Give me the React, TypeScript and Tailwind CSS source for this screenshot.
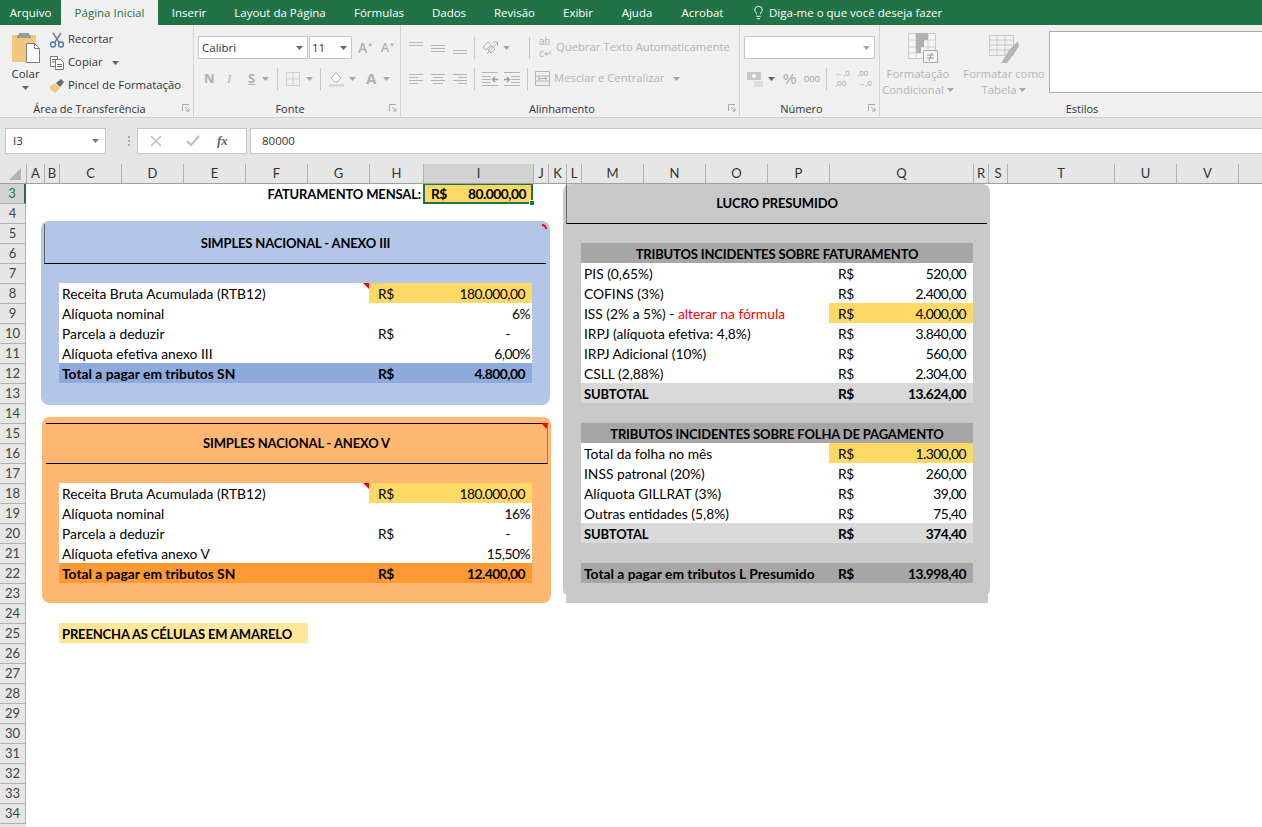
import { ReactNode } from 'react';
import { Lightbulb } from 'lucide-react';

const TABS = [
    ['Arquivo', 61], ['Página Inicial', 97], ['Inserir', 62], ['Layout da Página', 120], ['Fórmulas', 78],
    ['Dados', 62], ['Revisão', 69], ['Exibir', 58], ['Ajuda', 60], ['Acrobat', 71],
] as const;

const COLS = [
    ['A', 18], ['B', 15], ['C', 62], ['D', 62], ['E', 62], ['F', 62], ['G', 62], ['H', 54], ['I', 110], ['J', 15], ['K', 18], ['L', 15],
    ['M', 62], ['N', 62], ['O', 62], ['P', 62], ['Q', 144], ['R', 15], ['S', 19], ['T', 107], ['U', 62], ['V', 62], ['', 24],
] as const;

const ROWS = Array.from({ length: 32 }, (_, i) => i + 3);

function Caret({ color = '#a6a6a6' }: { color?: string }) {
    return (
        <svg width="7" height="4" viewBox="0 0 7 4" className="shrink-0">
            <path d="M0 0h7L3.5 4z" fill={color} />
        </svg>
    );
}

function Launcher() {
    return (
        <svg width="8" height="8" viewBox="0 0 8 8" fill="none" stroke="#a8a8a8">
            <path d="M.5 7V.5H7M3 3l4 4M7 4v3H4" />
        </svg>
    );
}

function Sep({ h = 22 }: { h?: number }) {
    return <div className="w-px bg-[#c6c6c6]" style={{ height: h }} />;
}

function Lines({ rows, w = 14 }: { rows: number[][]; w?: number }) {
    return (
        <svg width={w} height="14" viewBox={`0 0 ${w} 14`} stroke="#b4b4b4" fill="none">
            {rows.map(([y, x1, x2]) => (
                <path key={`${y}-${x1}`} d={`M${x1} ${y}.5H${x2}`} />
            ))}
        </svg>
    );
}

function Group({ width, label, labelX, children, last }: { width: number; label: string; labelX?: number; children: ReactNode; last?: boolean }) {
    return (
        <div className={`relative flex shrink-0 flex-col ${last ? '' : 'border-r border-[#d4d4d4]'}`} style={{ width }}>
            <div className="h-[77px]">{children}</div>
            <div className="relative flex h-[13px] items-center justify-center text-[11px] leading-none text-[#333]">
                <span className="whitespace-nowrap" style={labelX ? { marginLeft: labelX } : undefined}>{label}</span>
                {!last && (
                    <span className="absolute right-[3px] top-[2px]">
                        <Launcher />
                    </span>
                )}
            </div>
        </div>
    );
}

function Clipboard() {
    return (
        <div className="flex h-full">
            <div className="ml-[8px] flex w-[35px] flex-col items-center pt-[7px]">
                <svg width="30" height="31" viewBox="0 0 30 31">
                    <rect x="1" y="3" width="24" height="27" fill="#f0c97f" />
                    <path d="M8 3V1h10v2h2v3H6V3z" fill="#9a9a9a" />
                    <path d="M15.5 11.5h8l5 5v14h-13z" fill="#fff" stroke="#7b7b7b" />
                    <path d="M23.5 11.5v5h5" fill="none" stroke="#7b7b7b" />
                </svg>
                <span className="mt-[3px] text-[11.5px] leading-[16px] text-[#333]">Colar</span>
                <span className="mt-[4px]"><Caret color="#666" /></span>
            </div>
            <div className="ml-[6px] flex flex-col pt-[3px] text-[11.3px] text-[#333]">
                <div className="flex h-[23px] items-center whitespace-nowrap">
                    <svg width="16" height="16" viewBox="0 0 16 16" fill="none" className="mr-[3px]">
                        <path d="M4 1l6 9M12 1L6 10" stroke="#777" strokeWidth="1.4" />
                        <circle cx="4" cy="12.5" r="2.5" stroke="#3b79b6" strokeWidth="1.3" />
                        <circle cx="12" cy="12.5" r="2.5" stroke="#3b79b6" strokeWidth="1.3" />
                    </svg>
                    Recortar
                </div>
                <div className="flex h-[23px] items-center whitespace-nowrap">
                    <svg width="16" height="15" viewBox="0 0 16 15" fill="#fff" stroke="#777" className="mr-[3px]">
                        <path d="M1.5 1.5h7v10h-7z" />
                        <path d="M6.5 4.5h5l3 3v7h-8z" />
                        <path d="M3 4.5h4M3 7h3M8 9.5h5M8 11.5h5" stroke="#3b79b6" />
                    </svg>
                    Copiar
                    <span className="ml-[9px]"><Caret color="#666" /></span>
                </div>
                <div className="flex h-[23px] items-center whitespace-nowrap">
                    <svg width="16" height="14" viewBox="0 0 16 14" className="mr-[3px]">
                        <path d="M0 8l6-4 5 5-5 5-2-2-1 0z" fill="#f0c97f" />
                        <path d="M7 4l5-4 3 3-4 5z" fill="#6b6b6b" />
                    </svg>
                    Pincel de Formatação
                </div>
            </div>
        </div>
    );
}

function FontGroup() {
    return (
        <div className="flex h-full flex-col">
            <div className="flex items-center pl-[4px] pt-[11px]">
                <div className="flex h-[23px] w-[110px] items-center justify-between border border-[#c6c6c6] bg-white pl-[3px] pr-[4px] text-[11.5px] text-[#333]">
                    Calibri
                    <Caret color="#666" />
                </div>
                <div className="ml-px flex h-[23px] w-[43px] items-center justify-between border border-[#c6c6c6] bg-white pl-[2px] pr-[4px] text-[11.5px] text-[#333]">
                    11
                    <Caret color="#666" />
                </div>
                <span className="ml-[6px] flex w-[23px] items-start text-[14px] font-semibold leading-none text-[#b0b0b0]">A<span className="text-[6px]">▲</span></span>
                <span className="flex w-[14px] items-start text-[12px] font-semibold leading-none text-[#b0b0b0]">A<span className="text-[6px]">▼</span></span>
            </div>
            <div className="box-content flex h-[23px] items-center pl-[10px] pt-[8px] text-[13px] font-bold text-[#b0b0b0]">
                <span className="w-[21px]">N</span>
                <span className="w-[23px] pl-[2px] font-['Liberation_Serif',serif] font-normal italic">I</span>
                <span className="w-[14px] underline">S</span>
                <Caret />
                <span className="ml-[8px] mr-[8px]"><Sep /></span>
                <svg width="14" height="14" viewBox="0 0 14 14" fill="none" stroke="#b4b4b4" strokeDasharray="1 1">
                    <path d="M.5.5h13v13H.5zM7 .5v13M.5 7h13" />
                </svg>
                <span className="ml-[6px]"><Caret /></span>
                <span className="ml-[7px] mr-[8px]"><Sep /></span>
                <svg width="15" height="16" viewBox="0 0 15 16">
                    <path d="M2 7l5-5 5 5-4 4H6z" fill="#fff" stroke="#b4b4b4" />
                    <path d="M0 13h15v3H0z" fill="#d9d9d9" />
                </svg>
                <span className="ml-[5px]"><Caret /></span>
                <span className="ml-[10px] text-[15px] leading-none">A</span>
                <span className="ml-[7px]"><Caret /></span>
            </div>
        </div>
    );
}

function IndentIcon({ flip }: { flip?: boolean }) {
    return (
        <svg width="16" height="14" viewBox="0 0 16 14" fill="none" stroke="#b4b4b4" className={flip ? '' : '-scale-x-100'}>
            <path d="M0 .5h16M0 13.5h16M7 4.5h9M7 7.5h9M7 10.5h9" />
            <path d="M0 7.5h5M3 5l2.5 2.5L3 10" stroke="#9a9a9a" strokeWidth="1.3" />
        </svg>
    );
}

function AlignGroup() {
    return (
        <div className="flex h-full flex-col whitespace-nowrap text-[11.3px] text-[#b4b4b4]">
            <div className="box-content flex h-[23px] items-center pl-[8px] pt-[11px]">
                <Lines rows={[[1, 0, 14], [4, 0, 14]]} />
                <span className="ml-[8px]"><Lines rows={[[4, 0, 14], [7, 0, 14], [10, 0, 14]]} /></span>
                <span className="ml-[8px]"><Lines rows={[[9, 0, 14], [12, 0, 14]]} /></span>
                <span className="mx-[7px]"><Sep /></span>
                <svg width="17" height="15" viewBox="0 0 17 15" fill="none" stroke="#b4b4b4" className="overflow-visible">
                    <path d="M1 7l5-5 3 3-5 5zM6 10l4-4 3 3-4 4z" />
                    <path d="M5 14L15 3M11 2h4.500v4" />
                </svg>
                <span className="ml-[4px]"><Caret /></span>
                <span className="ml-[19px] mr-[9px]"><Sep /></span>
                <span className="mr-[4px] font-['Liberation_Sans',sans-serif] text-[10px] leading-[12px]">ab<br />c↵</span>
                Quebrar Texto Automaticamente
            </div>
            <div className="box-content flex h-[23px] items-center pl-[8px] pt-[8px]">
                <Lines rows={[[2, 0, 14], [5, 0, 9], [8, 0, 14], [11, 0, 9]]} />
                <span className="ml-[8px]"><Lines rows={[[2, 0, 14], [5, 2, 12], [8, 0, 14], [11, 2, 12]]} /></span>
                <span className="ml-[8px]"><Lines rows={[[2, 0, 14], [5, 5, 14], [8, 0, 14], [11, 5, 14]]} /></span>
                <span className="mx-[7px]"><Sep /></span>
                <IndentIcon />
                <span className="ml-[6px]"><IndentIcon flip /></span>
                <span className="ml-[7px] mr-[7px]"><Sep /></span>
                <svg width="15" height="15" viewBox="0 0 15 15" fill="none" stroke="#b4b4b4" className="mr-[4px]">
                    <path d="M.5.5h14v14H.5zM.5 5h14M.5 10h14M3 7.500h9M5 6l-2 1.500L5 9M10 6l2 1.500L10 9" />
                </svg>
                Mesclar e Centralizar
                <span className="ml-[9px]"><Caret /></span>
            </div>
        </div>
    );
}

function NumberGroup() {
    return (
        <div className="flex h-full flex-col px-[4px] pt-[11px] text-[#a8a8a8]">
            <div className="flex h-[23px] w-[131px] items-center justify-end border border-[#c6c6c6] bg-white pr-[4px]">
                <Caret />
            </div>
            <div className="box-content flex h-[23px] items-center whitespace-nowrap pl-[3px] pt-[8px] font-['Liberation_Sans',sans-serif]">
                <svg width="17" height="16" viewBox="0 0 17 16">
                    <path d="M0 1h14v8H0z" fill="#c8c8c8" />
                    <circle cx="7" cy="5" r="2" fill="#fff" />
                    <path d="M7 11h9M7 13h9M7 15h9" stroke="#c8c8c8" />
                </svg>
                <span className="ml-[4px]"><Caret color="#666" /></span>
                <span className="ml-[8px] w-[21px] text-[15px] leading-none">%</span>
                <span className="w-[22px] text-[9.5px] leading-none">000</span>
                <span className="mr-[8px]"><Sep /></span>
                <span className="w-[22px] text-[8px] leading-[10px]">←,0<br />,00</span>
                <span className="text-[8px] leading-[10px]">,00<br />→,0</span>
            </div>
        </div>
    );
}

function StylesGroup() {
    return (
        <div className="flex h-full items-start text-[11.3px] leading-[16px] text-[#b4b4b4]">
            <div className="ml-[5px] flex w-[66px] flex-col items-center pt-[8px]">
                <svg width="30" height="30" viewBox="0 0 30 30" className="ml-[10px]">
                    <path d="M.5.5h27v25H.5z" fill="#f4f4f4" stroke="#c8c8c8" />
                    <path d="M.5 7h27M.5 14h27M.5 20h27M8 .5v25M20 .5v25" stroke="#d0d0d0" />
                    <path d="M8 0h12v7H8zM8 7h8v7H8zM8 14h5v6H8z" fill="#b0b0b0" />
                    <path d="M15.500 17.500h14v12h-14z" fill="#f4f4f4" stroke="#aaa" />
                    <path d="M19 22h7M19 25h7M24 20l-3 8" stroke="#999" fill="none" />
                </svg>
                <span className="mt-[3px] whitespace-nowrap">Formatação</span>
                <span className="flex items-center gap-[3px] whitespace-nowrap">Condicional <Caret /></span>
            </div>
            <div className="ml-[12px] flex w-[82px] flex-col items-center pt-[8px]">
                <svg width="30" height="30" viewBox="0 0 30 30">
                    <path d="M.5 2.500h24v20H.5zM.5 7h24M.5 12h24M.5 17h24M8 2.500v20M16 2.500v20" fill="#f0f0f0" stroke="#c8c8c8" />
                    <path d="M29 8l-8 8-9 14h6l9-12 3-5z" fill="#b4b4b4" />
                </svg>
                <span className="mt-[3px] whitespace-nowrap">Formatar como</span>
                <span className="flex items-center gap-[3px] whitespace-nowrap">Tabela <Caret /></span>
            </div>
            <div className="ml-[4px] mt-[6px] h-[62px] flex-1 border border-r-0 border-[#ababab] bg-white" />
        </div>
    );
}

function SheetRow({ label, value, bold, caps, yellow, bg, pad = 'val', labelW, cur = true, red }: {
    label?: string; value: string; bold?: boolean; caps?: boolean; yellow?: boolean; bg?: string; pad?: 'val' | 'pct' | 'dash'; labelW: 'sn' | 'lp'; cur?: boolean; red?: string;
}) {
    const padClass = pad === 'pct' ? 'pr-[2px]' : pad === 'dash' ? 'pr-[22px]' : 'pr-[7px]';
    return (
        <div className={`flex h-5 items-center whitespace-nowrap ${bold ? 'font-bold' : ''} ${bg ?? 'bg-white'}`}>
            <div className={`${labelW === 'sn' ? 'w-[310px]' : 'w-[248px]'} pl-[3px] ${caps ? 'pt-[3px] text-[13px] tracking-[-0.15px]' : 'pt-[2px]'}`}>
                {label}
                {red && <span className="text-[#ff0000]">{red}</span>}
            </div>
            <div className={`flex h-full flex-1 items-center tracking-[-0.5px] ${yellow ? 'bg-[#ffd966]' : ''}`}>
                <span className="w-[54px] pl-[9px] pt-[2px]">{cur ? 'R$' : ''}</span>
                <span className={`flex-1 pt-[2px] text-right ${padClass}`}>{value}</span>
            </div>
        </div>
    );
}

function SnPanel({ title, pct, efetiva, efetivaPct, total, tone }: { title: string; pct: string; efetiva: string; efetivaPct: string; total: string; tone: 'blue' | 'orange' }) {
    const blue = tone === 'blue';
    return (
        <div className={`relative ${blue ? 'ml-[15px] mt-[17px] h-[184px] bg-[#b4c6e7]' : 'ml-[16px] mt-[12px] h-[186px] bg-[#ffb871]'} w-[509px] rounded-[8px] pt-[3px]`}>
            {/* comentario no canto */}
            {blue ? (
                <span className="absolute right-[3px] top-[3px] h-[5px] w-[5px] rounded-tr-[5px] border-r-2 border-t-2 border-[#ff0000]" />
            ) : (
                <span className="absolute right-[4px] top-[6px] h-0 w-0 border-l-[6px] border-t-[6px] border-l-transparent border-t-[#ff0000]" />
            )}
            <div className={`flex items-center justify-center border-b border-black text-[13px] font-bold tracking-[-0.15px] ${blue ? 'ml-[3px] mr-[4px] h-[40px] border-l border-l-[#666]' : 'ml-[4px] mr-[3px] mt-[3px] h-[41px] border-r border-t border-r-[#a87a4c]'}`}>
                {title}
            </div>
            <div className={`${blue ? 'ml-[18px]' : 'ml-[17px]'} relative mt-[19px] w-[473px]`}>
                <span className="absolute left-[304px] top-0 h-0 w-0 border-l-[6px] border-t-[6px] border-l-transparent border-t-[#ff0000]" />
                <SheetRow labelW="sn" label="Receita Bruta Acumulada (RTB12)" value="180.000,00" yellow />
                <SheetRow labelW="sn" label="Alíquota nominal" value={pct} pad="pct" cur={false} />
                <SheetRow labelW="sn" label="Parcela a deduzir" value="-" pad="dash" />
                <SheetRow labelW="sn" label={efetiva} value={efetivaPct} pad="pct" cur={false} />
                <SheetRow labelW="sn" label="Total a pagar em tributos SN" value={total} bold bg={blue ? 'bg-[#8ea9db]' : 'bg-[#ff9933]'} />
            </div>
        </div>
    );
}

function LpHeader({ children }: { children: ReactNode }) {
    return <div className="flex h-5 items-center justify-center whitespace-nowrap bg-[#a6a6a6] pt-[3px] text-[13px] font-bold tracking-[-0.15px]">{children}</div>;
}

export default function App() {
    return (
        <div className="flex h-[827px] w-[1262px] flex-col overflow-hidden bg-white font-['Lato',sans-serif] text-[13.8px] text-black">
            {/* Abas */}
            <div className="flex h-[25px] shrink-0 items-center bg-[#217346] font-['Open_Sans',sans-serif] text-[11.5px] text-white">
                {TABS.map(([name, w]) => (
                    <div
                        key={name}
                        className={`flex h-full items-center justify-center whitespace-nowrap ${name === 'Página Inicial' ? 'bg-[#f0f0f0] text-[#217346]' : ''}`}
                        style={{ width: w }}
                    >
                        {name}
                    </div>
                ))}
                <Lightbulb size={15} strokeWidth={1.5} className="ml-[13px]" />
                <span className="ml-[3px] whitespace-nowrap">Diga-me o que você deseja fazer</span>
            </div>

            {/* Faixa de opcoes */}
            <div className="flex h-[93px] shrink-0 border-b border-[#cfcfcf] bg-[#f0f0f0] font-['Open_Sans',sans-serif]">
                <Group width={194} label="Área de Transferência" labelX={-14}><Clipboard /></Group>
                <Group width={207} label="Fonte" labelX={-14}><FontGroup /></Group>
                <Group width={339} label="Alinhamento" labelX={-16}><AlignGroup /></Group>
                <Group width={140} label="Número" labelX={-16}><NumberGroup /></Group>
                <Group width={382} label="Estilos" labelX={22} last><StylesGroup /></Group>
            </div>

            {/* Barra de formulas */}
            <div className="flex h-[46px] shrink-0 flex-col bg-[#e6e6e6] font-['Open_Sans',sans-serif] text-[11.5px] text-[#333]">
                <div className="mt-[10px] flex h-[26px] items-stretch">
                    <div className="ml-[5px] flex w-[101px] items-center justify-between border border-[#c6c6c6] bg-white pl-[7px] pr-[6px]">
                        I3
                        <Caret color="#7b7b7b" />
                    </div>
                    <div className="ml-[15px] flex w-[16px] flex-col items-center justify-center gap-[2px]">
                        <i className="h-[2px] w-[2px] bg-[#a8a8a8]" />
                        <i className="h-[2px] w-[2px] bg-[#a8a8a8]" />
                        <i className="h-[2px] w-[2px] bg-[#a8a8a8]" />
                    </div>
                    <div className="flex w-[110px] items-center border border-[#c6c6c6] bg-white">
                        <svg width="12" height="12" viewBox="0 0 12 12" stroke="#bdbdbd" strokeWidth="1.5" className="ml-[12px]"><path d="M1 1l10 10M11 1L1 11" /></svg>
                        <svg width="14" height="12" viewBox="0 0 14 12" stroke="#bdbdbd" strokeWidth="2" fill="none" className="ml-[24px]"><path d="M1 6l4 4 8-9" /></svg>
                        <span className="ml-[17px] font-['Liberation_Serif',serif] text-[13px] font-bold italic text-[#666]">fx</span>
                    </div>
                    <div className="ml-[3px] flex flex-1 items-center border border-r-0 border-[#c6c6c6] bg-white pl-[11px]">80000</div>
                </div>
            </div>

            {/* Cabecalho das colunas */}
            <div className="flex h-5 shrink-0 border-b border-[#9f9f9f] bg-[#e6e6e6] text-[13px] text-[#333]">
                <div className="flex w-[27px] shrink-0 items-end justify-end border-r border-[#b1b1b1] pb-[3px] pr-[5px]">
                    <div className="h-0 w-0 border-b-[12px] border-l-[12px] border-b-[#b4b4b4] border-l-transparent" />
                </div>
                {COLS.map(([name, w]) => (
                    <div
                        key={name}
                        className={`flex shrink-0 items-center justify-center border-r border-[#b1b1b1] ${name === 'I' ? 'bg-[#d2d2d2]' : ''}`}
                        style={{ width: w }}
                    >
                        {name}
                    </div>
                ))}
            </div>

            <div className="flex min-h-0 flex-1 overflow-hidden">
                {/* Cabecalho das linhas */}
                <div className="w-[26px] shrink-0 bg-[#e6e6e6] text-[13px] text-[#444]">
                    {ROWS.map((n) => (
                        <div
                            key={n}
                            className={`flex h-5 items-center justify-center border-b border-r border-[#b1b1b1] ${n === 3 ? 'border-r-2 border-r-[#217346] bg-[#d2d2d2] text-[#217346]' : ''}`}
                        >
                            {n}
                        </div>
                    ))}
                </div>

                {/* Planilha */}
                <div className="flex flex-1 items-start">
                    <div className="relative -mt-px w-[537px] shrink-0">
                        <div className="flex h-[21px] items-center justify-end pr-[30px] font-bold">
                            <span className="mr-[2px] whitespace-nowrap pt-[2px] text-[13px] tracking-[-0.15px]">FATURAMENTO MENSAL:</span>
                            <div className="relative flex h-[21px] w-[110px] items-center justify-between border-2 border-[#217346] bg-[#ffd966] pl-[6px] pr-[5px] pt-[1px] tracking-[-0.5px]">
                                <span>R$</span>
                                <span>80.000,00</span>
                                <span className="absolute -bottom-[4px] -right-[4px] h-[6px] w-[6px] border border-white bg-[#217346]" />
                            </div>
                        </div>
                        <SnPanel tone="blue" title="SIMPLES NACIONAL - ANEXO III" pct="6%" efetiva="Alíquota efetiva anexo III" efetivaPct="6,00%" total="4.800,00" />
                        <SnPanel tone="orange" title="SIMPLES NACIONAL - ANEXO V" pct="16%" efetiva="Alíquota efetiva anexo V" efetivaPct="15,50%" total="12.400,00" />
                        <div className="ml-[33px] mt-[20px] flex h-5 w-[249px] items-center whitespace-nowrap bg-[#ffe699] pl-[3px] pt-[3px] text-[13px] font-bold tracking-[-0.15px]">
                            PREENCHA AS CÉLULAS EM AMARELO
                        </div>
                    </div>

                    <div className="w-[427px] shrink-0">
                        <div className="h-[413px] rounded-[8px] bg-[#c9c9c9]">
                            <div className="ml-[3px] mr-[3px] flex h-[40px] items-center justify-center border-b border-l border-b-black border-l-[#666] text-[13px] font-bold tracking-[-0.15px]">
                                LUCRO PRESUMIDO
                            </div>
                            <div className="ml-[18px] mt-[19px] w-[392px]">
                                <LpHeader>TRIBUTOS INCIDENTES SOBRE FATURAMENTO</LpHeader>
                                <SheetRow labelW="lp" label="PIS (0,65%)" value="520,00" />
                                <SheetRow labelW="lp" label="COFINS (3%)" value="2.400,00" />
                                <SheetRow labelW="lp" label="ISS (2% a 5%) - " red="alterar na fórmula" value="4.000,00" yellow />
                                <SheetRow labelW="lp" label="IRPJ (alíquota efetiva: 4,8%)" value="3.840,00" />
                                <SheetRow labelW="lp" label="IRPJ Adicional (10%)" value="560,00" />
                                <SheetRow labelW="lp" label="CSLL (2,88%)" value="2.304,00" />
                                <SheetRow labelW="lp" label="SUBTOTAL" caps value="13.624,00" bold bg="bg-[#d9d9d9]" />

                                <div className="mt-[20px]">
                                    <LpHeader>TRIBUTOS INCIDENTES SOBRE FOLHA DE PAGAMENTO</LpHeader>
                                </div>
                                <SheetRow labelW="lp" label="Total da folha no mês" value="1.300,00" yellow />
                                <SheetRow labelW="lp" label="INSS patronal (20%)" value="260,00" />
                                <SheetRow labelW="lp" label="Alíquota GILLRAT (3%)" value="39,00" />
                                <SheetRow labelW="lp" label="Outras entidades (5,8%)" value="75,40" />
                                <SheetRow labelW="lp" label="SUBTOTAL" caps value="374,40" bold bg="bg-[#d9d9d9]" />

                                <div className="mt-[20px]">
                                    <SheetRow labelW="lp" label="Total a pagar em tributos L Presumido" value="13.998,40" bold bg="bg-[#a6a6a6]" />
                                </div>
                            </div>
                        </div>
                        {/* celula preenchida por baixo da forma */}
                        <div className="-mt-[8px] ml-[3px] mr-[2px] h-[14px] bg-[#c9c9c9]" />
                    </div>
                </div>
            </div>
        </div>
    );
}
